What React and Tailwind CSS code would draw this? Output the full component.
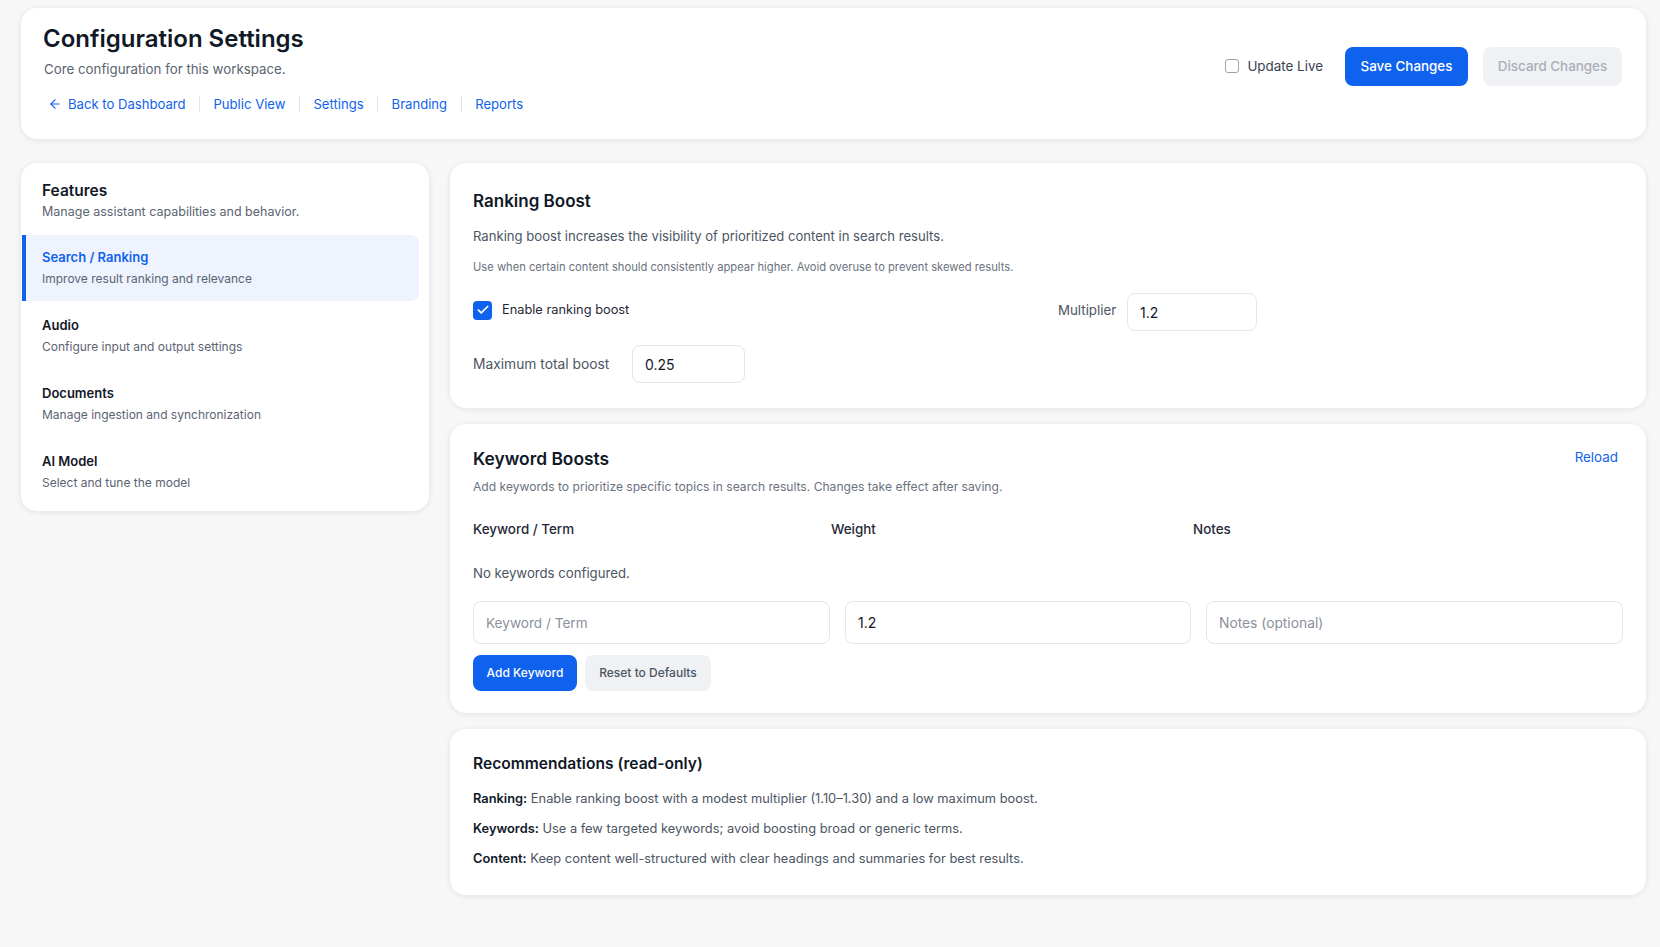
import { ArrowLeft, Check } from "lucide-react";

const navLinks = ["Public View", "Settings", "Branding", "Reports"];

const features = [
  { title: "Search / Ranking", desc: "Improve result ranking and relevance", active: true },
  { title: "Audio", desc: "Configure input and output settings" },
  { title: "Documents", desc: "Manage ingestion and synchronization" },
  { title: "AI Model", desc: "Select and tune the model" },
];

const recommendations = [
  { label: "Ranking:", text: "Enable ranking boost with a modest multiplier (1.10–1.30) and a low maximum boost." },
  { label: "Keywords:", text: "Use a few targeted keywords; avoid boosting broad or generic terms." },
  { label: "Content:", text: "Keep content well-structured with clear headings and summaries for best results." },
];

const card = "bg-white rounded-2xl shadow-[0_1px_6px_rgba(17,24,39,0.09)]";
const field = "border border-[#e4e6ec] rounded-lg bg-white text-[14px] text-[#111827] outline-none placeholder:text-[#8b919c]";

function Header() {
  return (
    <header className={`${card} h-[131px] flex justify-between pl-[22px] pr-6 pt-[15px]`}>
      <div>
        <h1 className="text-[24px] leading-8 font-semibold text-[#111827]">Configuration Settings</h1>
        <p className="text-[13.3px] leading-5 mt-1 ml-px text-[#5b6472]">Core configuration for this workspace.</p>
        <nav className="flex items-center mt-[15px] ml-[5px] text-[13.1px] leading-5 text-[#0f62ee]">
          <a href="#" className="flex items-center gap-[6px] pr-[13.5px]">
            <ArrowLeft size={14} strokeWidth={2} />
            Back to Dashboard
          </a>
          {navLinks.map((link) => (
            <a key={link} href="#" className="border-l border-[#e0e2e8] h-4 leading-4 px-[13.5px]">
              {link}
            </a>
          ))}
        </nav>
      </div>
      <div className="flex items-center gap-[22px] h-[39px] mt-[24px]">
        <label className="flex items-center gap-2 text-[13.4px] text-[#374151]">
          <span className="w-[14px] h-[14px] rounded-[3px] border border-[#9ca3af] bg-white" />
          Update Live
        </label>
        <div className="flex gap-[15px]">
          <button className="w-[123px] h-[39px] rounded-lg bg-[#0f62ee] text-white text-[13.4px] font-medium">Save Changes</button>
          <button className="w-[139px] h-[39px] rounded-lg bg-[#f0f1f4] text-[#a9aeb8] text-[13.4px] font-medium">Discard Changes</button>
        </div>
      </div>
    </header>
  );
}

function Sidebar() {
  return (
    <aside className={`${card} w-[408px] h-[348px] shrink-0 pt-[17px]`}>
      <div className="pl-[21px]">
        <h2 className="text-[15.5px] leading-[22px] font-semibold text-[#111827]">Features</h2>
        <p className="text-[12.5px] leading-5 text-[#5b6472]">Manage assistant capabilities and behavior.</p>
      </div>
      <ul className="mt-[13px] ml-px mr-[10px]">
        {features.map((item) => (
          <li
            key={item.title}
            className={`h-[66px] mb-[2px] pl-4 pt-3 border-l-4 ${
              item.active ? "border-[#0f62ee] bg-[#eef3fe] rounded-r-lg" : "border-transparent"
            }`}
          >
            <div className={`text-[13px] leading-5 font-semibold ${item.active ? "text-[#0f62ee]" : "text-[#111827]"}`}>
              {item.title}
            </div>
            <div className="text-[12px] leading-5 mt-[2px] text-[#5b6472]">{item.desc}</div>
          </li>
        ))}
      </ul>
    </aside>
  );
}

function RankingBoost() {
  return (
    <section className={`${card} h-[245px] px-[23px] pt-[26px]`}>
      <h2 className="text-[17px] leading-6 font-semibold text-[#111827]">Ranking Boost</h2>
      <p className="text-[13.1px] leading-5 mt-[13px] text-[#4b5563]">
        Ranking boost increases the visibility of prioritized content in search results.
      </p>
      <p className="text-[11.2px] leading-5 mt-[11px] text-[#6b7280]">
        Use when certain content should consistently appear higher. Avoid overuse to prevent skewed results.
      </p>
      <div className="flex items-center mt-[16px]">
        <label className="flex items-center gap-[10px] w-[585px] text-[12.8px] text-[#1f2937] -mt-1">
          <span className="w-[19px] h-[19px] rounded-[4px] bg-[#0f62ee] flex items-center justify-center">
            <Check size={14} strokeWidth={3} className="text-white" />
          </span>
          Enable ranking boost
        </label>
        <span className="text-[13.3px] text-[#4b5563] w-[69px] -mt-[3px]">Multiplier</span>
        <input readOnly value="1.2" className={`${field} w-[130px] h-[38px] px-3`} />
      </div>
      <div className="flex items-center mt-[14px]">
        <span className="text-[13.8px] text-[#4b5563] w-[159px]">Maximum total boost</span>
        <input readOnly value="0.25" className={`${field} w-[113px] h-[38px] px-3`} />
      </div>
    </section>
  );
}

function KeywordBoosts() {
  return (
    <section className={`${card} h-[289px] px-[23px] pt-[23px]`}>
      <div className="flex justify-between items-start">
        <h2 className="text-[17.4px] leading-6 font-semibold text-[#111827]">Keyword Boosts</h2>
        <a href="#" className="text-[13.4px] leading-5 mr-[5px] text-[#0f62ee]">Reload</a>
      </div>
      <p className="text-[12.1px] leading-5 mt-[6px] text-[#6b7280]">
        Add keywords to prioritize specific topics in search results. Changes take effect after saving.
      </p>
      <div className="grid grid-cols-[358px_362px_1fr] mt-[22px] text-[13.4px] leading-5 font-medium text-[#1f2937]">
        <div>Keyword / Term</div>
        <div>Weight</div>
        <div>Notes</div>
      </div>
      <p className="text-[13.2px] leading-5 mt-[24px] text-[#4b5563]">No keywords configured.</p>
      <div className="grid grid-cols-[357px_346px_1fr] gap-[15px] mt-[18px]">
        <input placeholder="Keyword / Term" className={`${field} h-[43px] px-3 placeholder:text-[13.6px]`} />
        <input readOnly value="1.2" className={`${field} h-[43px] px-3`} />
        <input placeholder="Notes (optional)" className={`${field} h-[43px] px-3 placeholder:text-[13.8px]`} />
      </div>
      <div className="flex gap-2 mt-[11px]">
        <button className="w-[104px] h-9 rounded-lg bg-[#0f62ee] text-white text-[12px] font-medium">Add Keyword</button>
        <button className="w-[126px] h-9 rounded-lg bg-[#f0f1f4] text-[#4b5563] text-[12px] font-medium">Reset to Defaults</button>
      </div>
    </section>
  );
}

function Recommendations() {
  return (
    <section className={`${card} h-[166px] px-[23px] pt-[23px]`}>
      <h2 className="text-[15.6px] leading-6 font-semibold text-[#111827]">Recommendations (read-only)</h2>
      <div className="mt-[13px] flex flex-col gap-[10px]">
        {recommendations.map((rec) => (
          <p key={rec.label} className="text-[12.85px] leading-5 text-[#4b5563]">
            <strong className="font-semibold text-[#111827]">{rec.label}</strong> {rec.text}
          </p>
        ))}
      </div>
    </section>
  );
}

export default function App() {
  return (
    <div className="min-h-[947px] bg-[#f7f7f8] pl-[21px] pr-[14px] pt-2 font-['Inter',sans-serif]">
      <Header />
      <div className="flex gap-[21px] mt-6">
        <Sidebar />
        <main className="flex-1 flex flex-col gap-4">
          <RankingBoost />
          <KeywordBoosts />
          <Recommendations />
        </main>
      </div>
    </div>
  );
}
